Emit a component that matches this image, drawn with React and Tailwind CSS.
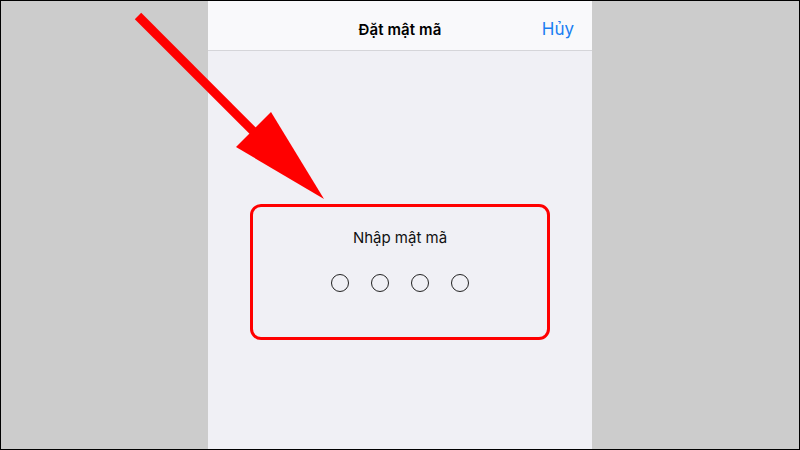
export default function App() {
  return (
    <div className="relative w-[800px] h-[450px] overflow-hidden border border-black bg-[#cccccc] flex justify-center" style={{ fontFamily: 'Inter, "Noto Sans", sans-serif' }}>
      <div className="w-[384px] h-full flex flex-col bg-[#f0f0f5]">
        <div className="h-[50px] shrink-0 bg-[#f9f9fb] border-b border-[#d5d5d9] relative flex items-center justify-center pt-[10px]">
          <span className="text-[15px] font-semibold text-black tracking-[0.1px]">Đặt mật mã</span>
          <span className="absolute right-[18px] text-[17px] text-[#1a7ff2] top-[16px]">Hủy</span>
        </div>
        <div className="flex justify-center pt-[153px]">
          <div className="w-[300px] h-[136px] border-[3px] border-[#ff0000] rounded-[11px] flex flex-col items-center">
            <div className="mt-[20px] text-[15px] text-[#111]">Nhập mật mã</div>
            <div className="mt-[24px] flex gap-[22px]">
              <div className="w-[18px] h-[18px] rounded-full border-[1.5px] border-[#222]" />
              <div className="w-[18px] h-[18px] rounded-full border-[1.5px] border-[#222]" />
              <div className="w-[18px] h-[18px] rounded-full border-[1.5px] border-[#222]" />
              <div className="w-[18px] h-[18px] rounded-full border-[1.5px] border-[#222]" />
            </div>
          </div>
        </div>
      </div>
      <svg className="absolute left-0 top-0" width="800" height="450" viewBox="0 0 800 450">
        <line x1="137" y1="15" x2="262" y2="140" stroke="#ff0000" strokeWidth="9" />
        <polygon points="235,146 270,111 323,198" fill="#ff0000" />
      </svg>
    </div>
  );
}
